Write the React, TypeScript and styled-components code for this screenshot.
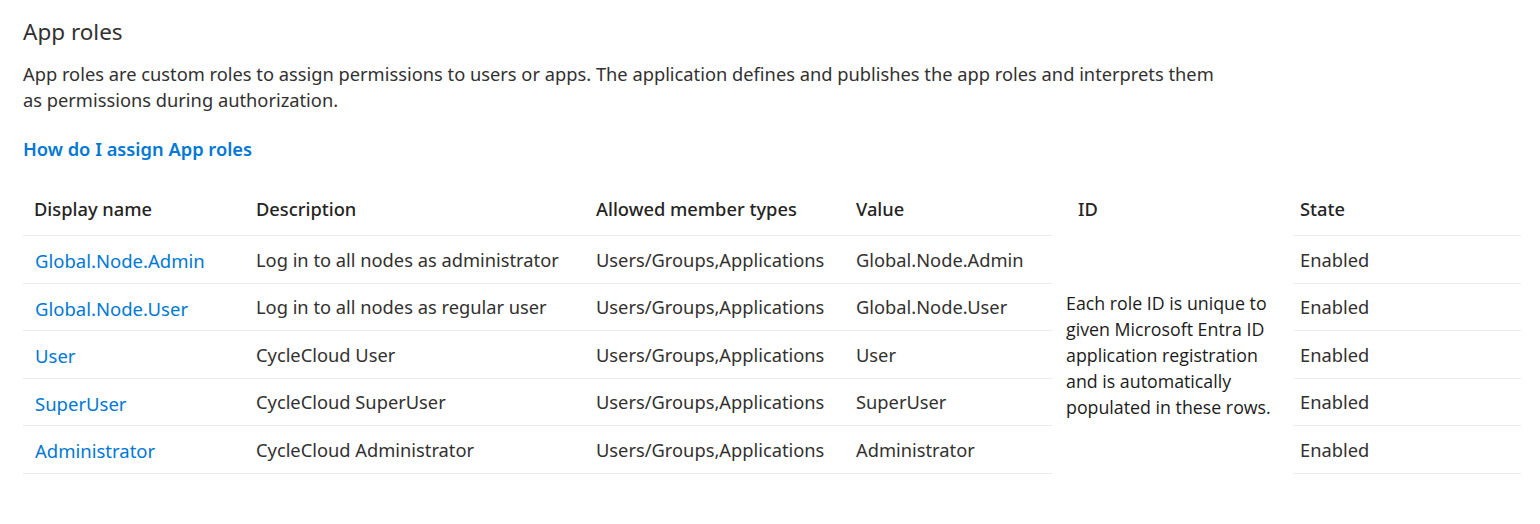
import React from 'react';
import styled, { createGlobalStyle } from 'styled-components';

const GlobalStyle = createGlobalStyle`
  body {
    margin: 0;
    background: #fff;
    font-family: "Noto Sans", "Open Sans", sans-serif;
    color: #323130;
  }
`;

const Page = styled.div`
  padding: 15px 18px 0 23px;
`;

const Title = styled.h2`
  font-size: 22.5px;
  font-weight: 400;
  margin: 0 0 12px;
  line-height: 34px;
`;

const Intro = styled.p`
  font-size: 18.3px;
  line-height: 26px;
  margin: 0;
  max-width: 1200px;
`;

const HelpLink = styled.a`
  display: block;
  margin-top: 23px;
  font-size: 18.3px;
  font-weight: 600;
  color: #0078d4;
  text-decoration: none;
  line-height: 26px;
`;

const Table = styled.div`
  display: grid;
  grid-template-columns: 222px 340px 260px 207px 242px 227px;
  grid-template-rows: 54px repeat(5, 47.5px);
  margin-top: 20px;
`;

const Cell = styled.div<{ $head?: boolean; $state?: boolean }>`
  display: flex;
  align-items: ${p => (p.$head ? 'flex-start' : 'center')};
  padding: ${p => (p.$head ? '14px' : '0')} ${p => (p.$state ? '6px' : '11px')} 0;
  font-size: 18.3px;
  font-weight: ${p => (p.$head ? 500 : 400)};
  color: ${p => (p.$head ? '#252423' : '#323130')};
  border-bottom: 1px solid #edebe9;
  white-space: nowrap;
`;

const IdHead = styled.div`
  padding: 14px 26px 0;
  font-size: 18.3px;
  font-weight: 500;
  color: #252423;
`;

const IdNote = styled.div`
  grid-column: 5;
  grid-row: 2 / span 5;
  display: flex;
  align-items: center;
  padding: 0 10px 0 14px;
  font-family: "Open Sans", sans-serif;
  font-size: 17.8px;
  line-height: 26px;
  color: #1b1b1b;
`;

const NameLink = styled.a`
  color: #0078d4;
  font-size: 18.5px;
  text-decoration: none;
  margin-top: 3px;
  margin-left: 1px;
`;

const roles = [
  ['Global.Node.Admin', 'Log in to all nodes as administrator'],
  ['Global.Node.User', 'Log in to all nodes as regular user'],
  ['User', 'CycleCloud User'],
  ['SuperUser', 'CycleCloud SuperUser'],
  ['Administrator', 'CycleCloud Administrator'],
];

export default function App() {
  return (
    <Page>
      <GlobalStyle />
      <Title>App roles</Title>
      <Intro>
        App roles are custom roles to assign permissions to users or apps. The application defines and publishes the app roles and interprets them as permissions during authorization.
      </Intro>
      <HelpLink href="#">How do I assign App roles</HelpLink>
      <Table>
        <Cell $head>Display name</Cell>
        <Cell $head>Description</Cell>
        <Cell $head>Allowed member types</Cell>
        <Cell $head>Value</Cell>
        <IdHead>ID</IdHead>
        <Cell $head $state>State</Cell>
        {roles.map(([name, desc]) => (
          <React.Fragment key={name}>
            <Cell><NameLink href="#">{name}</NameLink></Cell>
            <Cell>{desc}</Cell>
            <Cell>Users/Groups,Applications</Cell>
            <Cell>{name}</Cell>
            <Cell $state style={{ gridColumn: 6 }}>Enabled</Cell>
          </React.Fragment>
        ))}
        <IdNote>
          Each role ID is unique to given Microsoft Entra ID application registration and is automatically populated in these rows.
        </IdNote>
      </Table>
    </Page>
  );
}
